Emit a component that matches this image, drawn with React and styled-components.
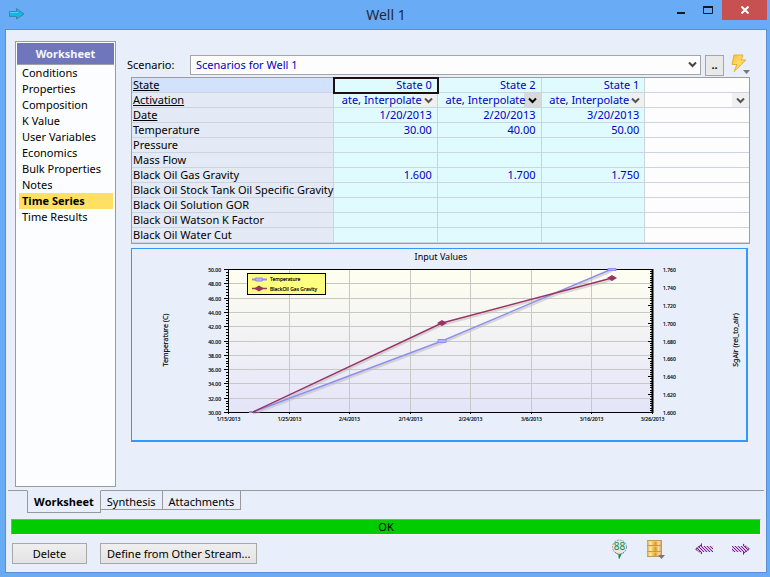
import React from "react";
import styled, { createGlobalStyle } from "styled-components";

const FONT = '"Noto Sans", "Open Sans", sans-serif';

const GlobalStyle = createGlobalStyle`
  *, *::before, *::after { box-sizing: border-box; }
  body { margin: 0; font: 11px/16px ${FONT}; color: #000; background: #6aabf6; }
  button, select { font: inherit; color: inherit; }
`;

const Window = styled.div`
  display: flex;
  flex-direction: column;
  min-height: 100vh;
  padding: 0 3px 4px 5px;
  background: #6aabf6;
`;

const TitleBar = styled.header`
  display: grid;
  grid-template-columns: 1fr auto 1fr;
  height: 29px;
`;

const TitleIcon = styled.svg`
  margin: 8px 0 0 4px;
`;

const Title = styled.h1`
  margin: 0;
  padding-top: 1px;
  font-size: 14px;
  font-weight: 400;
  line-height: 28px;
  color: #1c2a40;
`;

const WindowButtons = styled.div`
  display: flex;
  justify-content: flex-end;
`;

const WindowButton = styled.button`
  display: flex;
  align-items: center;
  justify-content: center;
  width: ${(p) => (p.$close ? 45 : 27)}px;
  height: 20px;
  padding: 0;
  border: 0;
  background: ${(p) => (p.$close ? "#c75050" : "transparent")};
`;

const Client = styled.div`
  display: flex;
  flex-direction: column;
  flex: 1;
  border: 1px solid #5a8fd0;
  background: #e8effa;
`;

const Body = styled.div`
  display: flex;
  flex: 1;
  gap: 11px;
  padding: 11px 16px 3px 9px;
`;

const Sidebar = styled.nav`
  flex: none;
  width: 101px;
  padding: 1px;
  border: 1px solid #999ba0;
  background: #fcfdfe;
`;

const SidebarTitle = styled.h2`
  margin: 0;
  border-bottom: 1px solid #a0a0a8;
  font-size: 11px;
  line-height: 21px;
  text-align: center;
  color: #f4f6ff;
  background: #7076bb;
`;

const NavList = styled.ul`
  margin: 0;
  padding: 0 1px 0 2px;
  list-style: none;
`;

const NavLink = styled.a`
  display: block;
  padding-left: 3px;
  line-height: 16px;
  color: #000;
  text-decoration: none;
  white-space: nowrap;
  font-family: ${(p) => (p.$active ? '"Open Sans", sans-serif' : "inherit")};
  font-weight: ${(p) => (p.$active ? 700 : 400)};
  background: ${(p) => (p.$active ? "#ffe065" : "transparent")};
`;

const Content = styled.main`
  flex: 1;
  min-width: 0;
`;

const ScenarioRow = styled.div`
  display: flex;
  align-items: center;
  height: 25px;
  margin-top: 11px;
`;

const ScenarioLabel = styled.label`
  width: 63px;
`;

const Picker = styled.div`
  display: grid;
  flex: 1;
  align-items: center;
  justify-items: end;
  height: ${(p) => (p.$cell ? "14px" : "20px")};
  & > * { grid-area: 1 / 1; }
  & > svg { pointer-events: none; margin-right: 4px; }
`;

const Select = styled.select`
  appearance: none;
  width: 100%;
  height: 20px;
  padding: 0 20px 0 5px;
  border: 1px solid #a3a5aa;
  border-radius: 0;
  color: #0000c0;
  background: #fdfdfe;
`;

const CellSelect = styled(Select)`
  height: 14px;
  padding: 0 15px 0 4px;
  border: 0;
  line-height: 14px;
  text-align-last: right;
  background: linear-gradient(${(p) => (p.$hot ? "#d9d9d9" : "#f0f0f0")} 0 0) right / 17px 14px no-repeat;
`;

const MoreButton = styled.button`
  width: 19px;
  height: 21px;
  margin: 1px 7px 0 4px;
  padding: 0;
  border: 1px solid #a6a6a6;
  font-weight: 700;
  line-height: 18px;
  background: #e9e9e9;
`;

const IconButton = styled.button`
  display: block;
  padding: 0;
  border: 0;
  background: transparent;
  & > svg { display: block; }
`;

const DataArea = styled.div`
  margin-left: 4px;
`;

const Table = styled.table`
  width: 100%;
  table-layout: fixed;
  border: 1px solid #9b9da1;
  border-bottom-width: 1px;
  border-spacing: 0;
  line-height: 14px;
`;

const LabelCol = styled.col`
  width: 202px;
`;

const RowHead = styled.th`
  height: 15px;
  padding: 0 0 0 1px;
  border: solid #ccd4e2;
  border-width: 0 1px 1px 0;
  font-weight: 400;
  text-align: left;
  white-space: nowrap;
  text-decoration: ${(p) => (p.$linked ? "underline" : "none")};
  background: ${(p) => (p.$current ? "#d2e2fa" : "#e3eaf6")};
`;

const Cell = styled.td`
  height: 15px;
  padding: 0 ${(p) => (p.$picker ? 0 : 5)}px 0 0;
  border: solid #ccd4e2;
  border-width: 0 1px 1px 0;
  text-align: right;
  color: #0000c0;
  background: ${(p) => (p.$blank ? "#fdfdfe" : "#e0fbfe")};
  outline: ${(p) => (p.$focused ? "2px solid #1c1010" : "none")};
  outline-offset: -1px;
  &:last-child { border-right: 0; }
`;

const ChartFrame = styled.figure`
  margin: 4px 2px 0 0;
  border: solid #3399f8;
  border-width: 1px 2px 2px 1px;
  & > svg { display: block; width: 100%; height: auto; }
`;

const Tabs = styled.div`
  display: flex;
  align-items: flex-start;
  margin: 0 2px;
  height: 29px;
  &::before, &::after {
    content: "";
    border-top: 1px solid #999;
  }
  &::before { width: 19px; }
  &::after { flex: 1; }
`;

const Tab = styled.button`
  height: ${(p) => (p.$active ? 23 : 20)}px;
  padding: ${(p) => (p.$active ? 0 : 3)}px 6px 0;
  border: 1px solid #999;
  border-top-color: ${(p) => (p.$active ? "#e8effa" : "#999")};
  border-left-width: ${(p) => (p.$active ? 1 : 0)}px;
  line-height: 15px;
  font-family: ${(p) => (p.$active ? '"Open Sans", sans-serif' : "inherit")};
  font-weight: ${(p) => (p.$active ? 700 : 400)};
  background: #e8effa;
`;

const Status = styled.div`
  margin: 0 5px;
  border: 1px solid #fff;
  border-top-color: #999;
  border-left-color: #999;
  line-height: 14px;
  text-align: center;
  background: #00cc00;
`;

const Footer = styled.footer`
  display: flex;
  align-items: flex-start;
  gap: 13px;
  height: 37px;
  padding: 8px 15px 0 6px;
`;

const PushButton = styled.button`
  height: 21px;
  min-width: 75px;
  padding: 0 6px;
  border: 1px solid #a8a8a8;
  line-height: 18px;
  background: linear-gradient(#efefef, #e3e3e3);
`;

const Tools = styled.div`
  display: flex;
  align-items: center;
  gap: 18px;
  height: 20px;
  margin: -4px 0 0 auto;
`;

const ArrowTools = styled.div`
  display: flex;
  gap: 17px;
  margin-left: 11px;
`;

const ChartText = styled.text`
  font-family: ${FONT};
  font-size: ${(p) => p.$size}px;
  text-anchor: ${(p) => p.$anchor || "middle"};
`;

const Chevron = ({ color = "#444" }) => (
  <svg width="9" height="7" viewBox="0 0 9 7" aria-hidden="true">
    <path d="M1 1.500 4.500 5 8 1.500" fill="none" stroke={color} strokeWidth="2" />
  </svg>
);

const LightningIcon = () => (
  <svg width="19" height="21" viewBox="0 0 19 21" aria-hidden="true">
    <defs>
      <linearGradient id="bolt" x1="0" x2="1" y1="0" y2="1">
        <stop offset="0" stopColor="#f6bd25" />
        <stop offset=".5" stopColor="#ffdf68" />
        <stop offset="1" stopColor="#e8a92c" />
      </linearGradient>
    </defs>
    <path d="M3 1h9L10 6h5L3 17.500 6 10.500H1z" fill="url(#bolt)" stroke="#e8ac3a" />
    <path d="M12 16h7l-3.500 4z" fill="#777" />
  </svg>
);

const TreeIcon = () => (
  <svg width="17" height="20" viewBox="0 0 17 20" aria-hidden="true">
    <path d="M8 15h2v2.500H9V19.500H7.500V16z" fill="#079447" />
    <circle cx="8.500" cy="8" r="7" fill="#e4e8e9" stroke="#8f9594" strokeDasharray="2 1" />
    <path d="M4 13q4.500 5 9 0" fill="none" stroke="#777" strokeDasharray="2 1" />
    <ChartText x="8.500" y="11" $size={10} fill="#079447">88</ChartText>
  </svg>
);

const BarrelIcon = () => (
  <svg width="19" height="20" viewBox="0 0 19 20" aria-hidden="true">
    <defs>
      <linearGradient id="barrel">
        <stop offset="0" stopColor="#d8993a" />
        <stop offset=".22" stopColor="#fff2a0" />
        <stop offset=".45" stopColor="#edb93e" />
        <stop offset=".58" stopColor="#d99b30" />
        <stop offset=".78" stopColor="#f8e3a4" />
        <stop offset="1" stopColor="#c78b38" />
      </linearGradient>
    </defs>
    <path d="M1 1h15v17H1z" fill="url(#barrel)" />
    <path d="M1 1.500h15M1 6.500h15M1 12.500h15M1 17.500h15" stroke="#c99755" />
    <path d="M2 2.500h13M2 7.500h13M2 13.500h13" stroke="#f1c985" strokeOpacity=".6" />
    <path d="M12 16h7l-3.500 4z" fill="#777" />
  </svg>
);

const PurpleArrow = ({ forward }) => (
  <svg width="20" height="14" viewBox="0 0 20 14" aria-hidden="true">
    <defs>
      <pattern id={forward ? "weaveR" : "weaveL"} width="3" height="3" patternUnits="userSpaceOnUse">
        <rect width="3" height="3" fill="#dcc5e4" />
        <path d="M0 0h1v1H0zM1 1h1v1H1zM2 2h1v1H2z" fill="#7c1f92" />
      </pattern>
    </defs>
    <path
      d={forward ? "M19 7 12 1V4H1v6h11v3z" : "M1 7 8 1V4h11v6H8v3z"}
      fill={`url(#${forward ? "weaveR" : "weaveL"})`}
    />
    <path
      d={forward ? "M12.500 2v2.500M14 4l4.500 3L14 10M12.500 10v2" : "M7.500 2v2.500M6 4 1.500 7 6 10M7.500 10v2"}
      fill="none"
      stroke="#79268e"
      strokeDasharray="2 1"
    />
  </svg>
);

const NAV = [
  "Conditions", "Properties", "Composition", "K Value", "User Variables",
  "Economics", "Bulk Properties", "Notes", "Time Series", "Time Results",
];

const STATES = ["State 0", "State 2", "State 1"];

const ROWS = [
  { label: "Date", linked: true, values: ["1/20/2013", "2/20/2013", "3/20/2013"] },
  { label: "Temperature", values: ["30.00", "40.00", "50.00"] },
  { label: "Pressure" },
  { label: "Mass Flow" },
  { label: "Black Oil Gas Gravity", values: ["1.600", "1.700", "1.750"] },
  { label: "Black Oil Stock Tank Oil Specific Gravity" },
  { label: "Black Oil Solution GOR" },
  { label: "Black Oil Watson K Factor" },
  { label: "Black Oil Water Cut" },
];

function StreamTable() {
  return (
    <Table>
      <colgroup>
        <LabelCol />
        <col /><col /><col /><col />
      </colgroup>
      <tbody>
        <tr>
          <RowHead scope="row" $linked $current>State</RowHead>
          {STATES.map((s, i) => <Cell key={s} $focused={i === 0}>{s}</Cell>)}
          <Cell $blank />
        </tr>
        <tr>
          <RowHead scope="row" $linked>Activation</RowHead>
          {[...STATES, ""].map((s, i) => (
            <Cell key={i} $picker $blank={!s}>
              <Picker $cell>
                <CellSelect $hot={i === 1} aria-label={`Activation ${s || "new state"}`}>
                  <option>{s ? "ate, Interpolate" : ""}</option>
                </CellSelect>
                <Chevron color={i === 1 ? "#000" : "#555"} />
              </Picker>
            </Cell>
          ))}
        </tr>
        {ROWS.map((row) => (
          <tr key={row.label}>
            <RowHead scope="row" $linked={row.linked}>{row.label}</RowHead>
            {STATES.map((s, i) => <Cell key={s}>{row.values?.[i]}</Cell>)}
            <Cell $blank />
          </tr>
        ))}
      </tbody>
    </Table>
  );
}

const LEFT = 96;
const RIGHT = 520;
const TOP = 20;
const BOTTOM = 163;
const DATES = ["1/15/2013", "1/25/2013", "2/4/2013", "2/14/2013", "2/24/2013", "3/6/2013", "3/16/2013", "3/26/2013"];
const xAt = (i) => Math.round(LEFT + ((RIGHT - LEFT) * i) / 7) + 0.5;
const yAt = (f) => Math.round(BOTTOM - (BOTTOM - TOP) * f) + 0.5;
const steps = (n) => Array.from({ length: n + 1 }, (_, i) => i);

function Chart() {
  return (
    <ChartFrame>
      <svg viewBox="0 0 614 191" role="img" aria-label="Input Values">
        <defs>
          <linearGradient id="plot" x2="0" y2="1">
            <stop offset="0" stopColor="#fffff0" />
            <stop offset="1" stopColor="#e4e4fa" />
          </linearGradient>
        </defs>
        <ChartText x="309" y="11" $size={9}>Input Values</ChartText>
        <rect x={LEFT} y={TOP} width={RIGHT - LEFT} height={BOTTOM - TOP} fill="url(#plot)" />
        <g stroke="#c8c8c4">
          {steps(7).slice(1, 7).map((i) => <path key={i} d={`M${xAt(i)} ${TOP}V${BOTTOM}`} />)}
          {steps(10).slice(1, 10).map((i) => <path key={i} d={`M${LEFT} ${yAt(i / 10)}H${RIGHT}`} />)}
        </g>
        <g stroke="#000">
          <path d={`M${LEFT} ${TOP + 0.5}H${RIGHT}M${LEFT} ${BOTTOM + 0.5}H${RIGHT}`} />
          <path d={`M${LEFT + 0.5} ${TOP}V${BOTTOM + 1}`} />
          <path d={`M${RIGHT + 0.5} ${TOP}V${BOTTOM + 1}`} strokeWidth="2" />
          {steps(50).map((i) => (
            <path key={i} d={`M${LEFT - (i % 5 ? 2 : 4)} ${yAt(i / 50)}H${LEFT}`} />
          ))}
          {steps(64).map((i) => (
            <path key={i} d={`M${RIGHT - (i % 8 ? 2 : 4)} ${yAt(i / 64)}H${RIGHT}`} />
          ))}
          {DATES.map((d, i) => <path key={d} d={`M${xAt(i)} ${BOTTOM}v2`} />)}
        </g>
        <g stroke="#000" strokeWidth=".15">
          {steps(10).map((i) => (
            <ChartText key={i} x="89" y={yAt(i / 10) + 2} $size={5} $anchor="end">{(30 + i * 2).toFixed(2)}</ChartText>
          ))}
          {steps(8).map((i) => (
            <ChartText key={i} x="531" y={yAt(i / 8) + 2} $size={5} $anchor="start">{(1.6 + i * 0.02).toFixed(3)}</ChartText>
          ))}
          {DATES.map((d, i) => (
            <ChartText key={d} x={xAt(i)} y="172" $size={5}>{d}</ChartText>
          ))}
          <ChartText transform="translate(36 91) rotate(-90)" $size={7}>Temperature (C)</ChartText>
          <ChartText transform="translate(606 91) rotate(-90)" $size={7}>SgAir (rel_to_air)</ChartText>
        </g>

        <g fill="none">
          <path d="M121 165 310 94 480 22M121 165 310 76 480 31" stroke="#b8b8b8" strokeOpacity=".5" strokeWidth="2" />
          <path d="M121 163 310 92 480 20" stroke="#8f8fea" strokeWidth="1.500" />
          <path d="M121 163 310 74 480 29" stroke="#993366" strokeWidth="1.500" />
          <path d="M306 90.500h8v3h-8zM476 19.500h8v2h-8z" fill="#b3b3f2" stroke="#8f8fea" />
        </g>
        <path d="M117 162h4v2h-4z" fill="#8f8fea" />
        <path d="M305 74l5-3 5 3-5 3zM475 29l5-3 5 3-5 3zM119 164l4-2 3 2z" fill="#993366" />

        <rect x="115.500" y="24.500" width="78" height="21" fill="#ffff80" stroke="#000" />
        <path d="M120 30.500h15" stroke="#8f8fea" strokeWidth="2" />
        <path d="M123.500 29h7v3h-7z" fill="#b3b3f2" stroke="#8f8fea" />
        <path d="M120 39.500h15" stroke="#993366" strokeWidth="1.500" />
        <path d="M122 39.500l5-3 5 3-5 3z" fill="#993366" />
        <g stroke="#000" strokeWidth=".15">
          <ChartText x="138" y="32" $size={5} $anchor="start">Temperature</ChartText>
          <ChartText x="138" y="42" $size={5} $anchor="start">BlackOil Gas Gravity</ChartText>
        </g>
      </svg>
    </ChartFrame>
  );
}

export default function App() {
  return (
    <Window>
      <GlobalStyle />
      <TitleBar>
        <TitleIcon width="16" height="12" viewBox="0 0 16 12" aria-hidden="true">
          <path d="M.5 3.500h7v-3L15 6l-7.500 5V8.500h-7z" fill="#17b5e6" stroke="#3488ad" />
          <path d="M1 4.500h8" stroke="#4ed3f4" />
        </TitleIcon>
        <Title>Well 1</Title>
        <WindowButtons>
          <WindowButton aria-label="Minimize">
            <svg width="9" height="8" viewBox="0 0 9 8"><path d="M0 6h8v2H0z" fill="#111a26" /></svg>
          </WindowButton>
          <WindowButton aria-label="Maximize">
            <svg width="11" height="9" viewBox="0 0 11 9">
              <path d="M.5 1.500h9v6h-9z" fill="none" stroke="#111a26" />
              <path d="M0 0h10v2H0z" fill="#111a26" />
            </svg>
          </WindowButton>
          <WindowButton $close aria-label="Close">
            <svg width="8" height="8" viewBox="0 0 8 8">
              <path d="M.5.5l7 7M7.500.5l-7 7" stroke="#fff" strokeWidth="2" />
            </svg>
          </WindowButton>
        </WindowButtons>
      </TitleBar>
      <Client>
        <Body>
          <Sidebar>
            <SidebarTitle>Worksheet</SidebarTitle>
            <NavList>
              {NAV.map((item) => (
                <li key={item}>
                  <NavLink href="#" $active={item === "Time Series"}>{item}</NavLink>
                </li>
              ))}
            </NavList>
          </Sidebar>
          <Content>
            <ScenarioRow>
              <ScenarioLabel htmlFor="scenario">Scenario:</ScenarioLabel>
              <Picker>
                <Select id="scenario">
                  <option>Scenarios for Well 1</option>
                </Select>
                <Chevron />
              </Picker>
              <MoreButton aria-label="Edit scenarios">..</MoreButton>
              <IconButton aria-label="Run"><LightningIcon /></IconButton>
            </ScenarioRow>
            <DataArea>
              <StreamTable />
              <Chart />
            </DataArea>
          </Content>
        </Body>
        <Tabs>
          <Tab $active>Worksheet</Tab>
          <Tab>Synthesis</Tab>
          <Tab>Attachments</Tab>
        </Tabs>
        <Status>OK</Status>
        <Footer>
          <PushButton>Delete</PushButton>
          <PushButton>Define from Other Stream...</PushButton>
          <Tools>
            <IconButton aria-label="Find"><TreeIcon /></IconButton>
            <IconButton aria-label="Fluid package"><BarrelIcon /></IconButton>
            <ArrowTools>
              <IconButton aria-label="Previous"><PurpleArrow /></IconButton>
              <IconButton aria-label="Next"><PurpleArrow forward /></IconButton>
            </ArrowTools>
          </Tools>
        </Footer>
      </Client>
    </Window>
  );
}
